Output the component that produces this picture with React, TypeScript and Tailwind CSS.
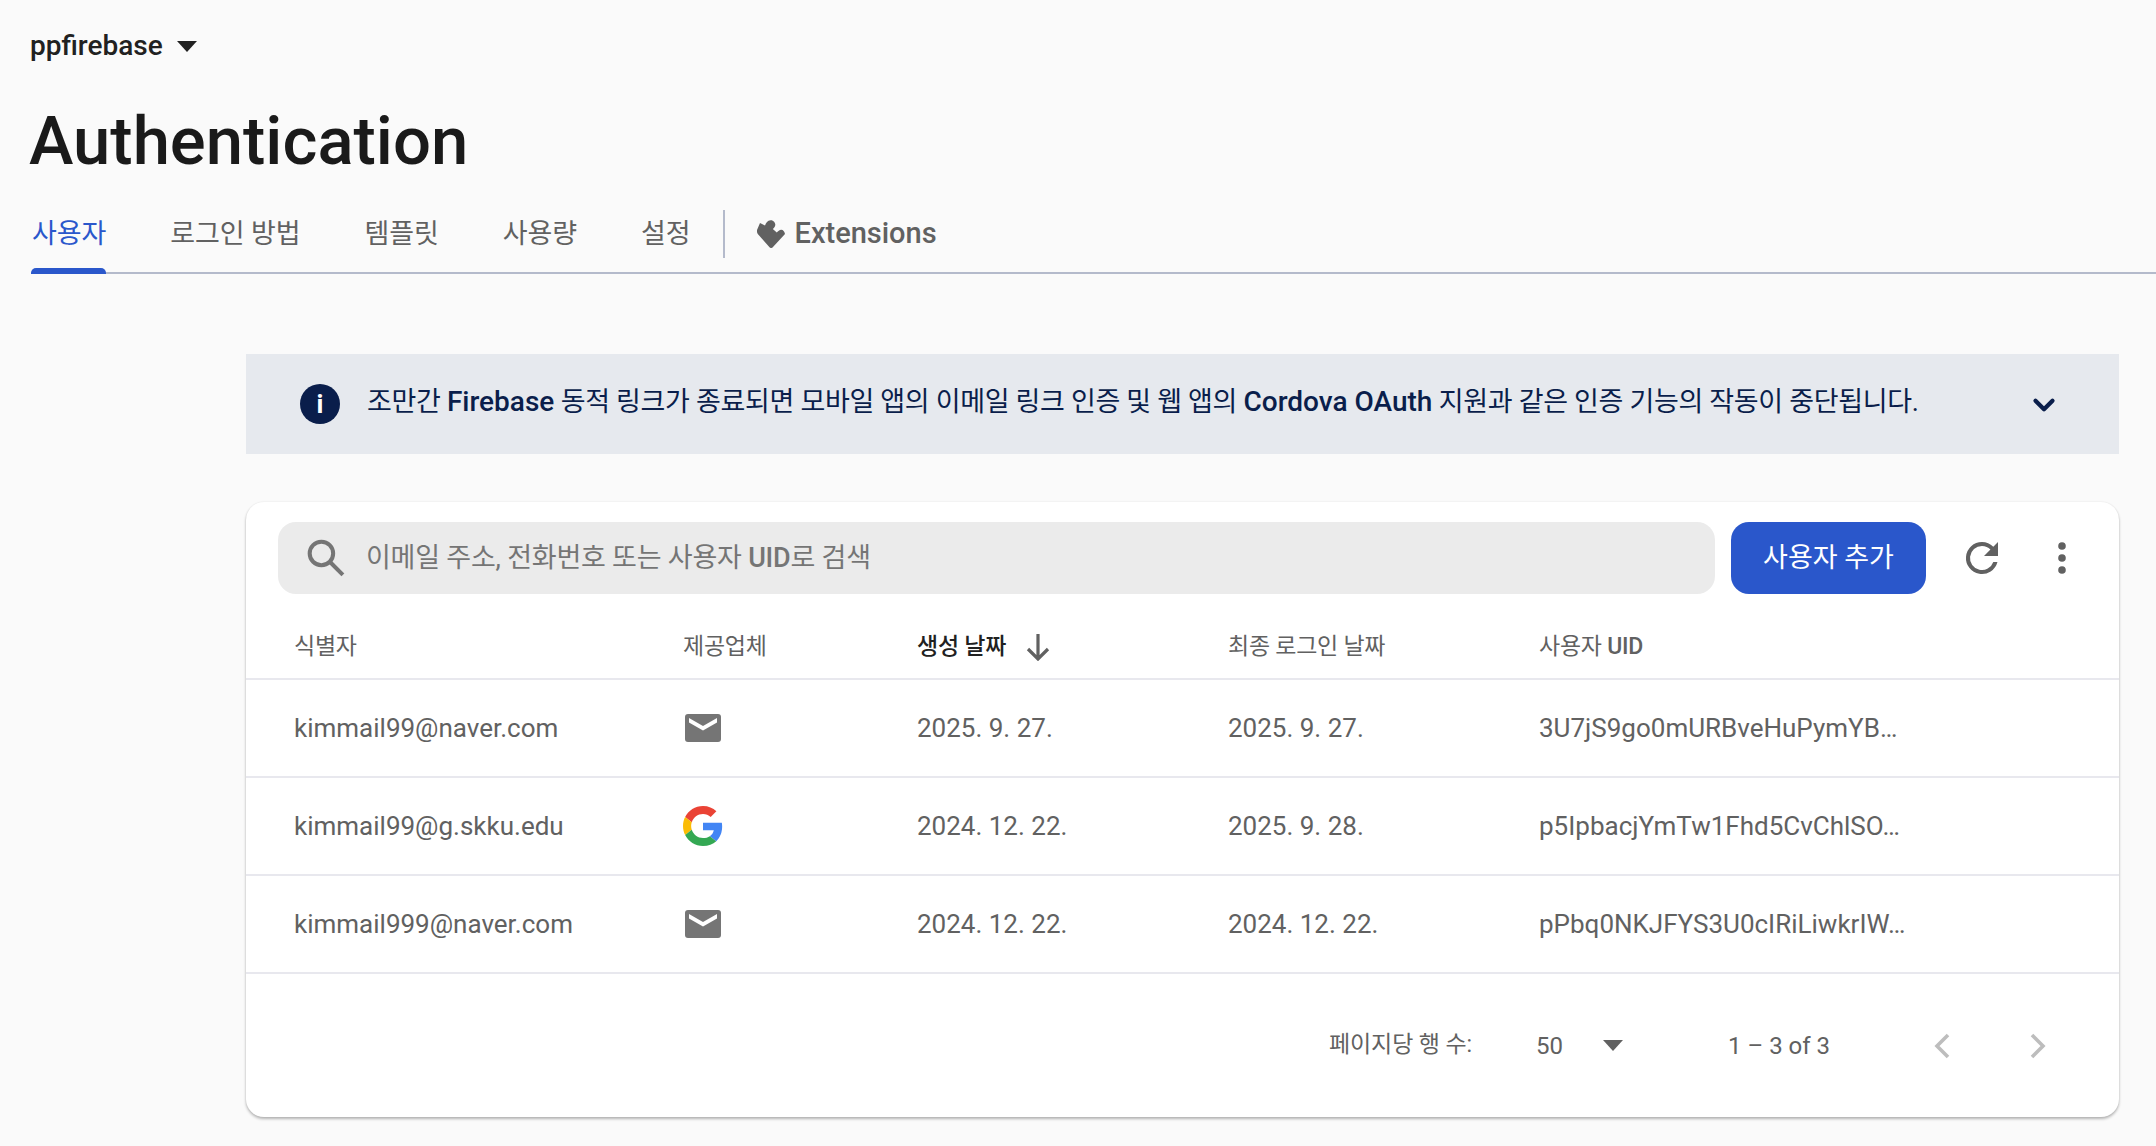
import { ChevronDown } from "lucide-react";

const font = { roboto: "font-['Roboto','Noto_Sans_CJK_KR',sans-serif]" };

const tabs = ["로그인 방법", "템플릿", "사용량", "설정"];

const users = [
  { id: "kimmail99@naver.com", provider: "mail", created: "2025. 9. 27.", last: "2025. 9. 27.", uid: "3U7jS9go0mURBveHuPymYB…" },
  { id: "kimmail99@g.skku.edu", provider: "google", created: "2024. 12. 22.", last: "2025. 9. 28.", uid: "p5IpbacjYmTw1Fhd5CvChlSO…" },
  { id: "kimmail999@naver.com", provider: "mail", created: "2024. 12. 22.", last: "2024. 12. 22.", uid: "pPbq0NKJFYS3U0cIRiLiwkrIW…" },
];

const MailIcon = () => (
  <svg width="36" height="28" viewBox="0 0 36 28" className="ml-[2px] block">
    <rect x="0" y="0" width="36" height="28" rx="3" fill="#757575" />
    <path d="M4 4l14 8 14-8v4.500l-14 8-14-8z" fill="#fff" />
  </svg>
);

const GoogleIcon = () => (
  <svg width="40" height="40" viewBox="0 0 48 48" className="block">
    <path fill="#EA4335" d="M24 9.5c3.54 0 6.71 1.22 9.21 3.6l6.85-6.85C35.9 2.38 30.47 0 24 0 14.62 0 6.51 5.38 2.56 13.22l7.98 6.19C12.43 13.72 17.74 9.5 24 9.5z" />
    <path fill="#4285F4" d="M46.98 24.55c0-1.57-.15-3.09-.38-4.55H24v9.02h12.94c-.58 2.96-2.26 5.48-4.78 7.18l7.73 6c4.51-4.18 7.09-10.36 7.09-17.65z" />
    <path fill="#FBBC05" d="M10.53 28.59c-.48-1.45-.76-2.99-.76-4.59s.27-3.14.76-4.59l-7.98-6.19C.92 16.46 0 20.12 0 24c0 3.88.92 7.54 2.56 10.78l7.97-6.19z" />
    <path fill="#34A853" d="M24 48c6.48 0 11.93-2.13 15.89-5.81l-7.73-6c-2.15 1.45-4.92 2.3-8.16 2.3-6.26 0-11.57-4.22-13.47-9.91l-7.98 6.19C6.51 42.62 14.62 48 24 48z" />
  </svg>
);

const Caret = ({ className }: { className: string }) => (
  <svg width="20" height="11" viewBox="0 0 20 11" className={className}>
    <path d="M0 0h20L10 11z" fill="currentColor" />
  </svg>
);

export default function App() {
  return (
    <div className={`min-h-[1146px] bg-[#fafafa] ${font.roboto} overflow-hidden`}>
      <div className="px-[30px] pt-[26px]">
        <div className="flex h-[40px] items-center gap-[14px] text-[28px] font-medium text-[#212121]">
          ppfirebase
          <Caret className="text-[#212121]" />
        </div>
        <h1 className="mt-[41px] -ml-[1px] h-[68px] text-[67px] leading-[68px] font-medium text-[#1a1a1a]">Authentication</h1>
      </div>

      <div className="mt-[25px] ml-[31px] flex h-[74px] items-stretch border-b-2 border-[#b4bacb] pb-[4px] pl-[1px]">
        <div className="relative flex items-center text-[27px] tracking-[-0.1px] text-[#2a57cb]">
          사용자
          <div className="absolute -bottom-[6px] -left-[1px] right-0 h-[6px] rounded-t-[5px] bg-[#2a57cb]" />
        </div>
        {tabs.map((t) => (
          <div key={t} className="ml-[64px] flex items-center text-[27px] tracking-[-0.1px] text-[#616161]">
            {t}
          </div>
        ))}
        <div className="ml-[32px] mt-[10px] h-[48px] w-[2px] bg-[#b4bacb]" />
        <div className="ml-[32px] flex items-center gap-[10px] text-[29px] font-medium text-[#616161]">
          <svg width="28" height="28" viewBox="0 0 28 28" className="block">
            <path
              fill="#616161"
              d="M0 10L3 3l5 2.500C9 3 10.500.5 13.500.3c3-.3 5 2.700 4.800 4.700-.2 1.700-1.300 3-2.500 4l4 3.600c1.200-1.600 2.700-2.800 4.400-2.900 1.800-.1 3.300 1.800 3.800 4.300L16 27c-1 1.300-2.500 1.300-3.500.3L.8 14C0 13-.2 11.500 0 10z"
            />
          </svg>
          Extensions
        </div>
      </div>

      <div className="ml-[246px] mr-[37px] mt-[80px]">
        <div className="flex h-[100px] items-center bg-[#e6e9ee] pl-[54px] pr-[58px] text-[#0a1e4b]">
          <div className="flex h-[40px] w-[40px] items-center justify-center rounded-full bg-[#0a1e4b] text-[26px] leading-none font-bold text-white">
            i
          </div>
          <div className="ml-[27px] flex-1 pb-[4px] text-[27px] tracking-[-0.33px] whitespace-nowrap">
            조만간 <span className="text-[28px] font-medium tracking-normal">Firebase</span> 동적 링크가 종료되면 모바일 앱의 이메일 링크 인증 및 웹 앱의{" "}
            <span className="text-[28px] font-medium tracking-normal">Cordova OAuth</span> 지원과 같은 인증 기능의 작동이 중단됩니다.
          </div>
          <ChevronDown size={34} strokeWidth={3} className="mt-[2px]" />
        </div>

        <div className="mt-[48px] h-[615px] rounded-[18px] bg-white shadow-[0_2px_3px_rgba(0,0,0,0.28),0_0_2px_rgba(0,0,0,0.08)]">
          <div className="flex items-center pl-[32px] pt-[20px]">
            <div className="flex h-[72px] w-[1437px] items-center rounded-[18px] bg-[#ebebeb] pl-[26px]">
              <svg width="44" height="44" viewBox="0 0 24 24" fill="none" stroke="#757575" strokeWidth="2.2" className="block">
                <circle cx="9.5" cy="9.5" r="6.4" />
                <path d="M14.2 14.2l7 7" />
              </svg>
              <span className="ml-[18px] pt-[1px] text-[27px] tracking-[-0.22px] text-[#757575]">
                이메일 주소, 전화번호 또는 사용자 <span className="font-medium">UID</span>로 검색
              </span>
            </div>
            <button className="ml-[16px] h-[72px] w-[195px] rounded-[18px] bg-[#2a57cb] text-[27px] text-white">사용자 추가</button>
            <svg width="48" height="48" viewBox="0 0 24 24" fill="#616161" className="ml-[32px] block">
              <path d="M17.65 6.35A7.96 7.96 0 0 0 12 4a8 8 0 1 0 7.73 10h-2.08A6 6 0 1 1 12 6c1.66 0 3.14.69 4.22 1.78L13 11h7V4z" />
            </svg>
            <svg width="8" height="32" viewBox="0 0 8 32" fill="#616161" className="ml-[52px] block">
              <circle cx="4" cy="4" r="3.8" />
              <circle cx="4" cy="16" r="3.8" />
              <circle cx="4" cy="28" r="3.8" />
            </svg>
          </div>

          <div className="mt-[18px] flex h-[68px] items-center border-b-2 border-[#e8e8ee] pt-[4px] text-[23px] tracking-[-0.25px] text-[#616161]">
            <div className="w-[437px] pl-[48px]">식별자</div>
            <div className="w-[234px]">제공업체</div>
            <div className="flex w-[311px] items-center gap-[20px] font-medium text-[#212121]">
              생성 날짜
              <svg width="24" height="28" viewBox="0 0 24 28" fill="none" stroke="#616161" strokeWidth="3.2" className="block">
                <path d="M12 1v25M2 16l10 10 10-10" />
              </svg>
            </div>
            <div className="w-[311px]">최종 로그인 날짜</div>
            <div>
              사용자 <span className="font-medium">UID</span>
            </div>
          </div>

          {users.map((u) => (
            <div key={u.id} className="flex h-[98px] items-center border-b-2 border-[#e8e8ee] text-[26px] text-[#616161]">
              <div className="w-[437px] pl-[48px]">{u.id}</div>
              <div className="w-[234px]">
                {u.provider === "mail" ? <MailIcon /> : <GoogleIcon />}
              </div>
              <div className="w-[311px]">{u.created}</div>
              <div className="w-[311px]">{u.last}</div>
              <div className="whitespace-nowrap">{u.uid}</div>
            </div>
          ))}

          <div className="flex h-[141px] items-center pt-[2px] text-[#616161]">
            <div className="ml-[1083px] w-[207px] text-[23px] tracking-[-0.1px]">페이지당 행 수:</div>
            <div className="w-[67px] text-[24px]">50</div>
            <Caret className="text-[#616161]" />
            <div className="ml-[105px] w-[204px] text-[24px]">1 – 3 of 3</div>
            <svg width="20" height="26" viewBox="0 0 20 26" fill="none" stroke="#bdbdbd" strokeWidth="3.6" className="block">
              <path d="M16 2L5 13l11 11" />
            </svg>
            <svg width="20" height="26" viewBox="0 0 20 26" fill="none" stroke="#bdbdbd" strokeWidth="3.6" className="ml-[76px] block">
              <path d="M4 2l11 11L4 24" />
            </svg>
          </div>
        </div>
      </div>
    </div>
  );
}
